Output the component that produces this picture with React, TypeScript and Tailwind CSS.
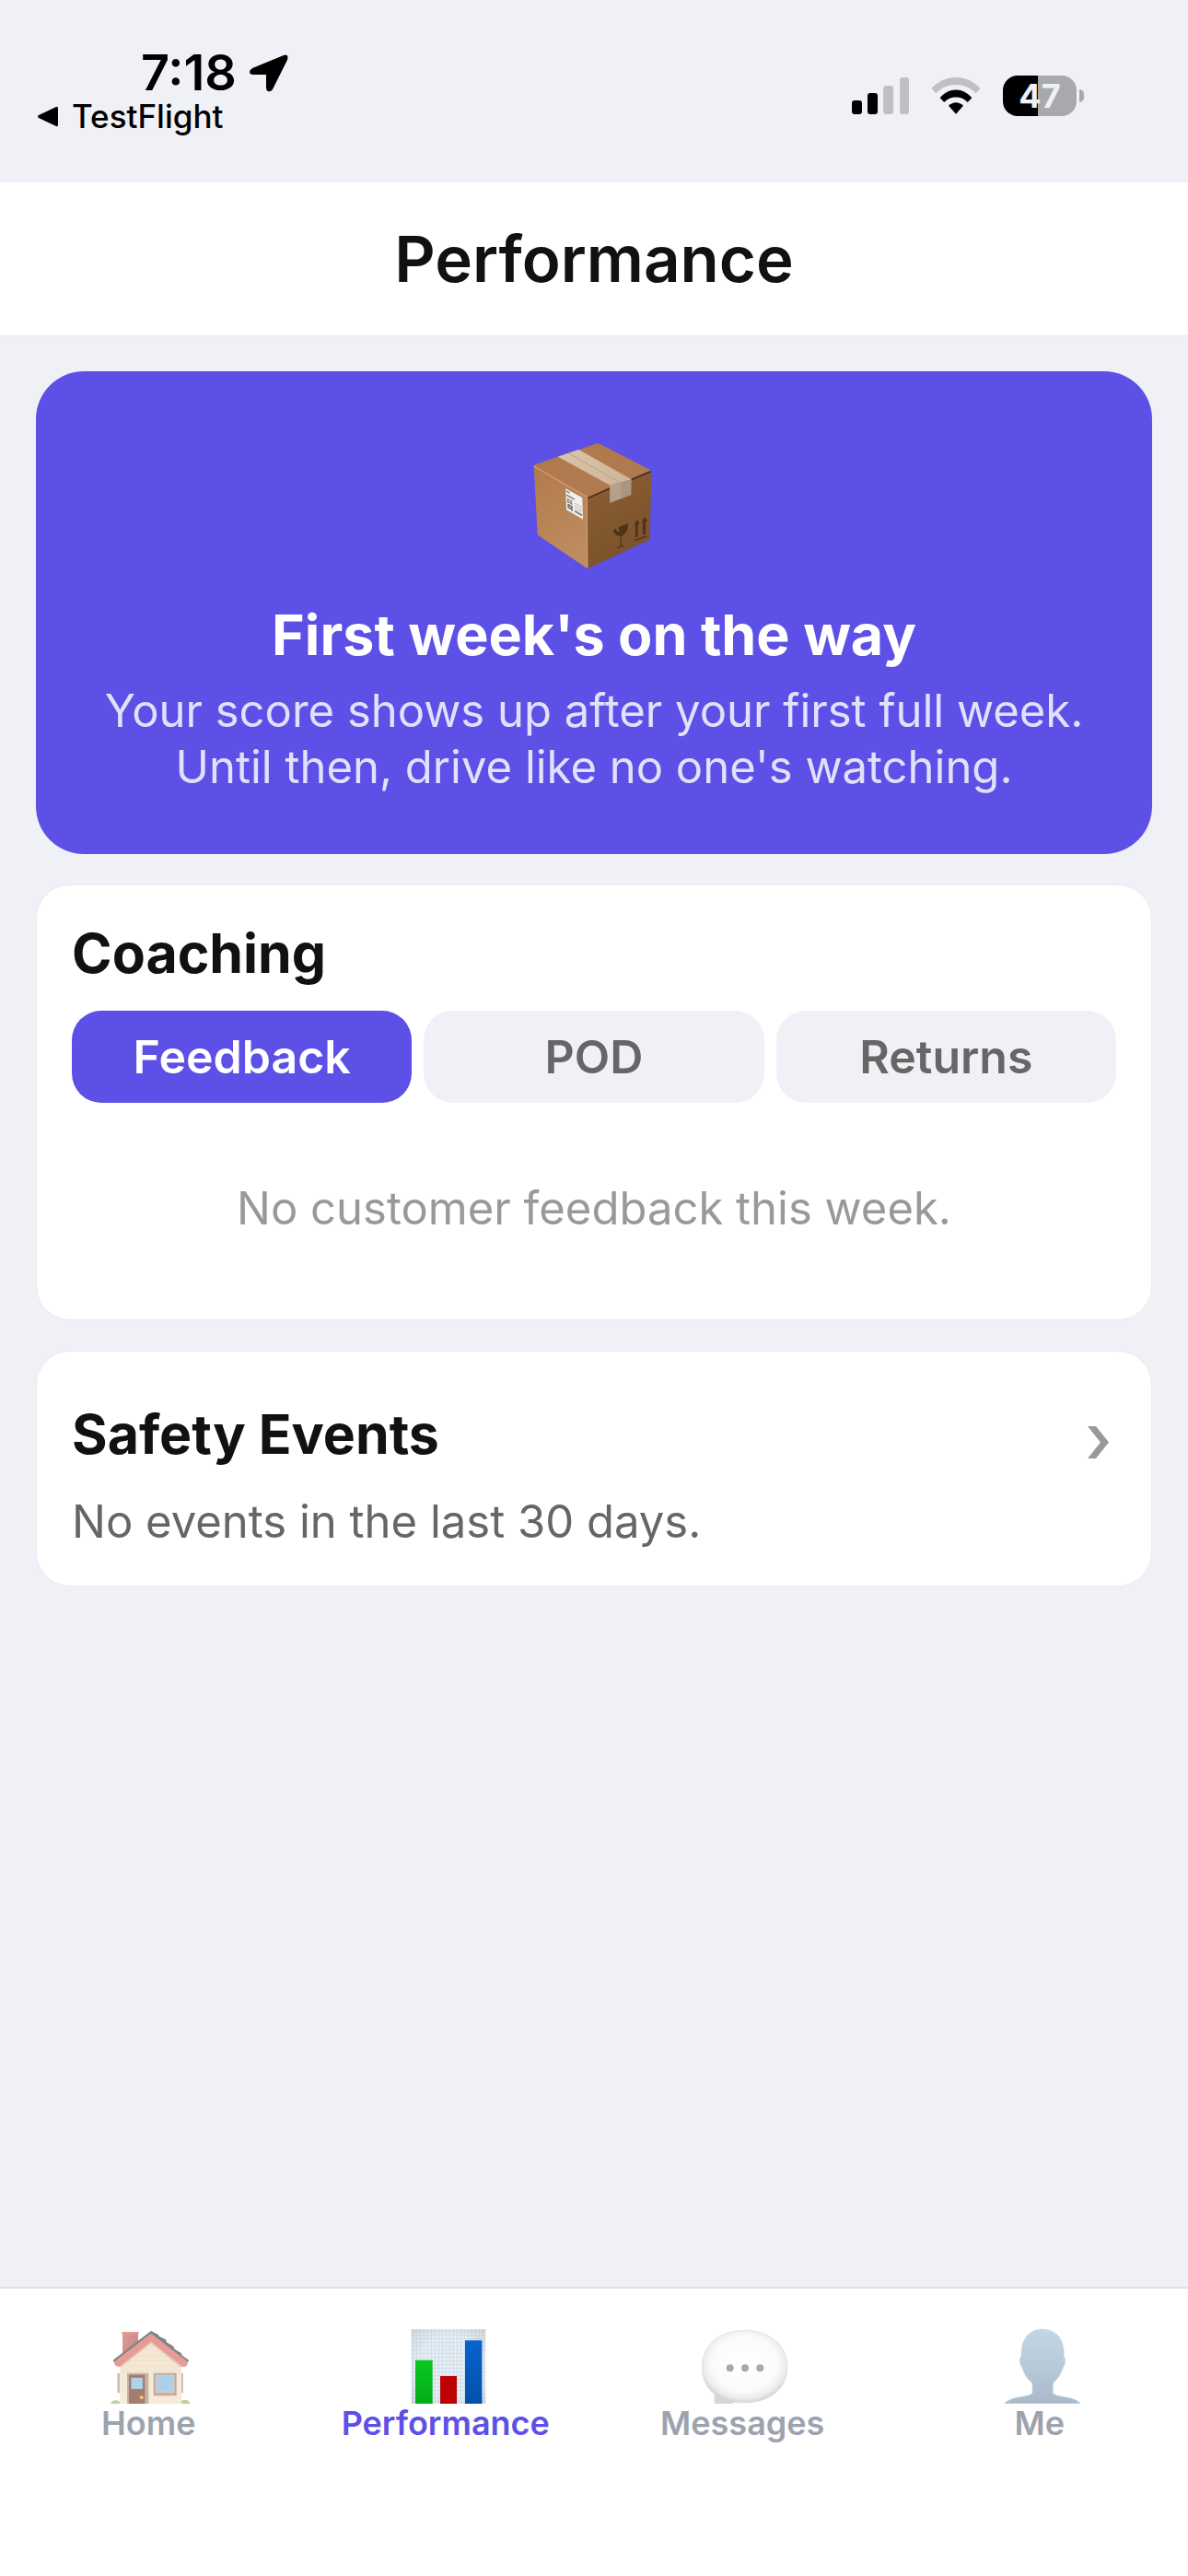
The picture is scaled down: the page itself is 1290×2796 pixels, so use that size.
import React, { useState } from 'react';
import clsx from 'clsx';

const PackageIcon: React.FC = () => (
  <svg width="133" height="138" viewBox="114 60 399 414" aria-hidden="true">
    <defs>
      <linearGradient id="box-left" x1="0" y1="0" x2="0.3" y2="1">
        <stop offset="0" stopColor="#b27a4c" />
        <stop offset="1" stopColor="#bd8c60" />
      </linearGradient>
      <linearGradient id="box-right" x1="0" y1="0" x2="0.4" y2="1">
        <stop offset="0" stopColor="#8d5f35" />
        <stop offset="1" stopColor="#7a522b" />
      </linearGradient>
      <linearGradient id="box-tape" x1="0" y1="0" x2="1" y2="1">
        <stop offset="0" stopColor="#d9c4ab" />
        <stop offset="1" stopColor="#cfb598" />
      </linearGradient>
    </defs>
    <path d="M116 138 L290 238 L291 472 L131 364 Q128 361 128 357 Z" fill="url(#box-left)" />
    <path d="M290 238 L497 153 Q499 154 499 158 L494 377 L291 472 Z" fill="url(#box-right)" />
    <path d="M115 138 Q116 135 122 132 L322 64 Q327 63 332 66 L497 151 L290 240 Z" fill="#b07a4e" />
    <path d="M116 138 L288 238 L290 468" fill="none" stroke="#ca976b" strokeWidth="5" strokeLinejoin="round" />
    <path d="M292 242 L364 210 M434 182 L497 155" stroke="#4a2f18" strokeWidth="5" />
    <path d="M194 107 L262 84 L434 181 L364 200 Z" fill="url(#box-tape)" />
    <path d="M230 96 L400 193" stroke="#baa288" strokeWidth="3" />
    <path d="M364 200 L434 181 L433 232 L364 257 Z" fill="#ab9680" />
    <path d="M364 200 L400 190 L400 243 L364 257 Z" fill="#b5a18b" />
    <path d="M220 211 L274 241 L276 311 L222 280 Z" fill="#f1f0ef" />
    <g stroke="#77716d" strokeWidth="3" fill="none">
      <path d="M223 219 L233 225 M223 232 L249 246" strokeWidth="4" />
      <path d="M225 244 L242 253 M225 252 L242 262 M227 246 L228 258 M237 252 L238 263" />
      <path d="M226 262 L243 272 M226 270 L243 281 M229 264 L230 276 M239 269 L240 284" strokeWidth="5" />
      <path d="M249 258 L272 271 M249 266 L272 279 M249 274 L272 287" stroke="#bbb6b2" />
      <path d="M249 284 L273 298" stroke="#8d8783" strokeWidth="6" />
    </g>
    <g fill="#4f3318">
      <path d="M375 345 L384 341 L388 353 L396 349 L390 338 L423 324 C424 344 416 361 400 366 C386 367 376 357 375 345 Z" />
      <path d="M398 364 L401 364 L401 400 L398 401 Z M387 402 L410 395 L410 399 L387 406 Z" />
      <path d="M444 331 L452 311 L461 325 L455 327 L455 367 L447 370 L447 330 Z" />
      <path d="M467 323 L476 303 L486 316 L480 318 L480 358 L471 362 L471 321 Z" />
      <path d="M444 378 L484 364 L484 368 L444 382 Z" />
    </g>
  </svg>
);

const HomeIcon: React.FC = () => (
  <svg width="100" height="83" viewBox="64 168 300 249" aria-hidden="true">
    <defs>
      <linearGradient id="chimney" x1="0" y1="0" x2="1" y2="1">
        <stop offset="0" stopColor="#e39a95" />
        <stop offset="1" stopColor="#bf8580" />
      </linearGradient>
      <linearGradient id="wall" x1="0" y1="0" x2="0" y2="1">
        <stop offset="0" stopColor="#f3e6d2" />
        <stop offset="1" stopColor="#f6ead9" />
      </linearGradient>
    </defs>
    <ellipse cx="108" cy="417" rx="16" ry="11" fill="#bcd19c" />
    <ellipse cx="334" cy="417" rx="16" ry="13" fill="#bcd19c" />
    <path d="M113 317 H122 V382 H113 Z M320 317 H328 V382 H320 Z" fill="#cdbfb2" />
    <path d="M130 185 H181 V240 L130 268 Z" fill="url(#chimney)" />
    <path d="M128 183 H183 V189 H128 Z" fill="#dd9c97" />
    <path d="M122 282 L223 205 L322 282 V417 H122 Z" fill="url(#wall)" />
    <path d="M165 262 H282 M140 278 H305 M122 294 H322 M122 310 H322" stroke="#ebdcc6" strokeWidth="2" />
    <path d="M99 275 L223 180 L246 192 L250 198 L271 208 L274 217 L296 230 L300 239 L320 251 L325 260 L346 275 L342 284 L223 192 L104 284 Z" fill="#7f8482" />
    <path d="M103 280 L223 188 L342 280 Q344 294 332 297 L326 297 L223 215 L120 297 Q103 297 103 280 Z" fill="#e89a97" />
    <path d="M122 298 L223 218 L322 298" fill="none" stroke="#dccab4" strokeWidth="4" />
    <path d="M145 317 H215 V417 H145 Z" fill="#c7b3a0" />
    <path d="M151 323 H203 V417 H151 Z" fill="#a57c70" />
    <path d="M157 331 H197 V370 H157 Z" fill="#aed3e6" stroke="#93776d" strokeWidth="2" />
    <circle cx="192" cy="397" r="6" fill="#eec979" />
    <path d="M231 317 H306 V391 H231 Z" fill="#bfae9d" />
    <path d="M238 323 H299 V382 H238 Z" fill="#dccdb9" />
    <path d="M242 326 H294 V376 H242 Z" fill="#accfea" />
  </svg>
);

const ChartIcon: React.FC = () => (
  <svg width="100" height="83" viewBox="251 168 300 249" aria-hidden="true">
    <defs>
      <pattern id="chart-grid" x="289" y="175" width="12" height="12" patternUnits="userSpaceOnUse">
        <path d="M0 0 H12 V12 H0 Z" fill="#f1f2f3" />
        <path d="M5 0 V12 M0 7 H12" stroke="#c6dcee" strokeWidth="3" />
      </pattern>
      <radialGradient id="chart-shade" r="0.75">
        <stop offset="0.55" stopColor="#9aa0a6" stopOpacity="0" />
        <stop offset="1" stopColor="#9aa0a6" stopOpacity="0.35" />
      </radialGradient>
      <linearGradient id="bar-green" x1="0" y1="0" x2="0" y2="1">
        <stop offset="0" stopColor="#0ac722" />
        <stop offset="1" stopColor="#03ad18" />
      </linearGradient>
      <linearGradient id="bar-blue" x1="0" y1="0" x2="0" y2="1">
        <stop offset="0" stopColor="#0763d0" />
        <stop offset="1" stopColor="#0350a8" />
      </linearGradient>
    </defs>
    <path d="M289 174 H531 V417 H289 Z" fill="url(#chart-grid)" />
    <path d="M289 174 H531 V417 H289 Z" fill="url(#chart-shade)" />
    <path d="M302 275 H358 V417 H302 Z" fill="url(#bar-green)" />
    <path d="M383 327 H437 V417 H383 Z" fill="#bd0204" />
    <path d="M464 211 H519 V417 H464 Z" fill="url(#bar-blue)" />
  </svg>
);

const BubbleIcon: React.FC = () => (
  <svg width="100" height="83" viewBox="169 168 300 249" aria-hidden="true">
    <defs>
      <radialGradient id="bubble" cx="0.5" cy="0.46" r="0.56">
        <stop offset="0" stopColor="#ffffff" />
        <stop offset="0.68" stopColor="#fbfbfb" />
        <stop offset="0.86" stopColor="#ececec" />
        <stop offset="1" stopColor="#cdcdcd" />
      </radialGradient>
    </defs>
    <path d="M228 385 L228 417 H288 L300 405 Z" fill="#d6d6d6" />
    <path
      d="M327 178 C410 178 466 228 466 297 C466 366 410 414 327 414 C290 414 260 411 235 391 C205 370 188 338 188 297 C188 228 244 178 327 178 Z"
      fill="url(#bubble)"
      stroke="#dcdcdc"
      strokeWidth="2"
    />
    <g fill="#a9a9a9">
      <circle cx="279" cy="301" r="12" />
      <circle cx="328" cy="301" r="12" />
      <circle cx="377" cy="301" r="12" />
    </g>
  </svg>
);

const PersonIcon: React.FC = () => (
  <svg width="100" height="83" viewBox="86 168 300 249" aria-hidden="true">
    <defs>
      <linearGradient id="person" x1="0" y1="0" x2="0" y2="1">
        <stop offset="0" stopColor="#c3d6e4" />
        <stop offset="0.5" stopColor="#b7cad8" />
        <stop offset="1" stopColor="#a8b9ca" />
      </linearGradient>
    </defs>
    <path
      d="M245 174 C288 174 314 205 315 250 L315 265 C322 268 321 287 313 298 C307 318 296 336 280 350 L279 380 C284 398 345 388 370 417 H120 C145 388 206 398 212 380 L211 350 C194 336 183 318 178 298 C169 287 168 268 175 265 L176 250 C177 205 202 174 245 174 Z"
      fill="url(#person)"
      stroke="#cfe5ee"
      strokeWidth="2"
    />
  </svg>
);

const StatusBar: React.FC = () => (
  <div className="flex items-center justify-between pt-[51px] pb-[53px] pl-10 pr-[113px] text-black">
    <div>
      <div className="flex items-center gap-[14px] pl-[113px]">
        <span className="text-[54px] leading-[56px] font-semibold">7:18</span>
        <svg width="42" height="41" viewBox="0 0 42 41" aria-hidden="true">
          <path d="M37 1 Q43 -1 41 6 L25 38 Q23 41 20 40 Q18 39 18 36 V22 H4 Q0 22 0 19 Q0 17 3 15 Z" fill="currentColor" />
        </svg>
      </div>
      <a href="#testflight" className="flex items-center gap-[14px] text-[35px] leading-[38px] font-medium">
        <svg width="24" height="23" viewBox="0 0 24 23" aria-hidden="true">
          <path d="M21 1 Q23 0 23 3 V20 Q23 23 21 22 L2 13 Q0 11 2 10 Z" fill="currentColor" />
        </svg>
        TestFlight
      </a>
    </div>
    <div className="mt-3 flex items-center gap-6">
      <svg width="62" height="40" viewBox="0 0 62 40" aria-hidden="true">
        <rect x="0" y="25" width="11" height="15" rx="3" />
        <rect x="17" y="17" width="11" height="23" rx="3" />
        <rect x="34" y="9" width="11" height="31" rx="3" fill="#bfbfc4" />
        <rect x="52" y="0" width="10" height="40" rx="3" fill="#bfbfc4" />
      </svg>
      <svg width="54" height="40" viewBox="393 72 162 120" aria-hidden="true">
        <path d="M394 108 C438 60 510 60 554 108 L539 124 C503 87 445 87 409 124 Z" fill="#bfbfc4" />
        <path d="M422 139 C450 104 498 104 526 139 L512 153 C492 131 456 131 436 153 Z" />
        <path d="M450 164 C464 150 484 150 498 164 L474 191 Z" />
      </svg>
      <div className="flex items-center gap-[3px]">
        <span className="flex h-11 w-20 items-center justify-center rounded-2xl bg-[linear-gradient(90deg,#000_47%,#a8a9ad_47%)] text-4xl font-bold text-[#f0f1f6]">
          47
        </span>
        <span className="h-[14px] w-[5px] rounded-r-full bg-[#a8a9ad]" />
      </div>
    </div>
  </div>
);

const coachingTabs = [
  { label: 'Feedback', empty: 'No customer feedback this week.' },
  { label: 'POD', empty: 'No POD issues this week.' },
  { label: 'Returns', empty: 'No returns this week.' },
];

const CoachingCard: React.FC = () => {
  const [active, setActive] = useState(0);

  return (
    <section className="rounded-[37px] border border-[#ebebee] bg-white px-[38px] pt-[38px] pb-[89px]">
      <h2 className="text-[59px] leading-[72px] font-bold">Coaching</h2>
      <div role="tablist" className="mt-[26px] flex gap-[13px]">
        {coachingTabs.map((tab, i) => (
          <button
            key={tab.label}
            role="tab"
            aria-selected={i === active}
            onClick={() => setActive(i)}
            className={clsx(
              'h-[100px] flex-1 rounded-[32px] text-[50px] font-semibold',
              i === active ? 'bg-[#5c50e6] text-white' : 'bg-[#f0f1f6] text-[#666666]'
            )}
          >
            {tab.label}
          </button>
        ))}
      </div>
      <p className="mt-[84px] text-center text-[49px] leading-[62px] text-[#999999]">{coachingTabs[active].empty}</p>
    </section>
  );
};

const navItems = [
  { label: 'Home', icon: HomeIcon },
  { label: 'Performance', icon: ChartIcon },
  { label: 'Messages', icon: BubbleIcon },
  { label: 'Me', icon: PersonIcon },
];

const App: React.FC = () => {
  return (
    <div className="flex min-h-screen flex-col bg-[#f0f1f6] font-['Inter',sans-serif] text-[#111111]">
      <StatusBar />
      <header className="border-b border-[#ebebee] bg-white py-10 text-center">
        <h1 className="text-[69px] leading-[86px] font-semibold">Performance</h1>
      </header>

      <main className="flex flex-1 flex-col gap-[33px] px-[39px] pt-[38px]">
        <section className="flex flex-col items-center rounded-[52px] bg-[#5c50e6] px-[39px] pt-[77px] pb-16 text-center">
          <PackageIcon />
          <h2 className="mt-8 text-[61px] leading-[78px] font-bold text-white">First week's on the way</h2>
          <p className="mt-[13px] text-[49px] leading-[61px] text-[#e2e0fb]">
            Your score shows up after your first full week.
            <br />
            Until then, drive like no one's watching.
          </p>
        </section>

        <CoachingCard />

        <button className="rounded-[37px] border border-[#ebebee] bg-white px-[38px] pt-[54px] pb-[38px] text-left">
          <span className="flex items-center justify-between pr-2">
            <span className="text-[59px] leading-[72px] font-bold">Safety Events</span>
            <svg className="mt-4" width="23" height="35" viewBox="0 0 23 35" aria-hidden="true">
              <path d="M0 0 H9 L23 17.5 L9 35 H0 L14 17.5 Z" fill="#999999" />
            </svg>
          </span>
          <span className="mt-7 block text-[49px] leading-[62px] text-[#666666]">No events in the last 30 days.</span>
        </button>
      </main>

      <nav className="flex border-t-2 border-[#dfdfe4] bg-white pt-[42px] pb-[145px]">
        {navItems.map(({ label, icon: Icon }) => (
          <a
            key={label}
            href={`#${label.toLowerCase()}`}
            aria-current={label === 'Performance' ? 'page' : undefined}
            className={clsx(
              'flex flex-1 flex-col items-center text-[36px] leading-[42px] font-semibold',
              label === 'Performance' ? 'text-[#5c50e6]' : 'text-[#9ca3af]'
            )}
          >
            <Icon />
            {label}
          </a>
        ))}
      </nav>
    </div>
  );
};

export default App;
